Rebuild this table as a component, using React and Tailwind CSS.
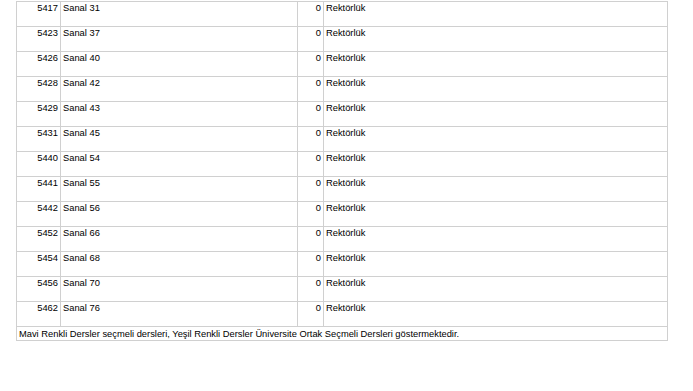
import React from "react";

const rows = [
  ["5417", "Sanal 31"],
  ["5423", "Sanal 37"],
  ["5426", "Sanal 40"],
  ["5428", "Sanal 42"],
  ["5429", "Sanal 43"],
  ["5431", "Sanal 45"],
  ["5440", "Sanal 54"],
  ["5441", "Sanal 55"],
  ["5442", "Sanal 56"],
  ["5452", "Sanal 66"],
  ["5454", "Sanal 68"],
  ["5456", "Sanal 70"],
  ["5462", "Sanal 76"],
];

export default function App() {
  return (
    <div
      className="w-[693px] h-[391px] bg-white pl-[16px] pt-[1px] text-[9.33px] text-black"
      style={{ fontFamily: '"Liberation Sans", Arial, sans-serif' }}
    >
      <div className="w-[652px] border-t border-[#d0d0d0]">
        {rows.map(([code, name]) => (
          <div
            key={code}
            className="flex h-[25px] border-x border-b border-[#d0d0d0] leading-[13px]"
          >
            <div className="w-[44px] shrink-0 border-r border-[#d0d0d0] px-[2px] text-right">
              {code}
            </div>
            <div className="w-[237px] shrink-0 border-r border-[#d0d0d0] px-[2px]">
              {name}
            </div>
            <div className="w-[26px] shrink-0 border-r border-[#d0d0d0] px-[2px] text-right">
              0
            </div>
            <div className="flex-1 px-[2px]">Rektörlük</div>
          </div>
        ))}
        <div className="h-[14px] overflow-hidden border-x border-b border-[#d0d0d0] px-[2px] pt-[1px] leading-[12px]">
          Mavi Renkli Dersler seçmeli dersleri, Yeşil Renkli Dersler Üniversite Ortak Seçmeli Dersleri göstermektedir.
        </div>
      </div>
    </div>
  );
}
